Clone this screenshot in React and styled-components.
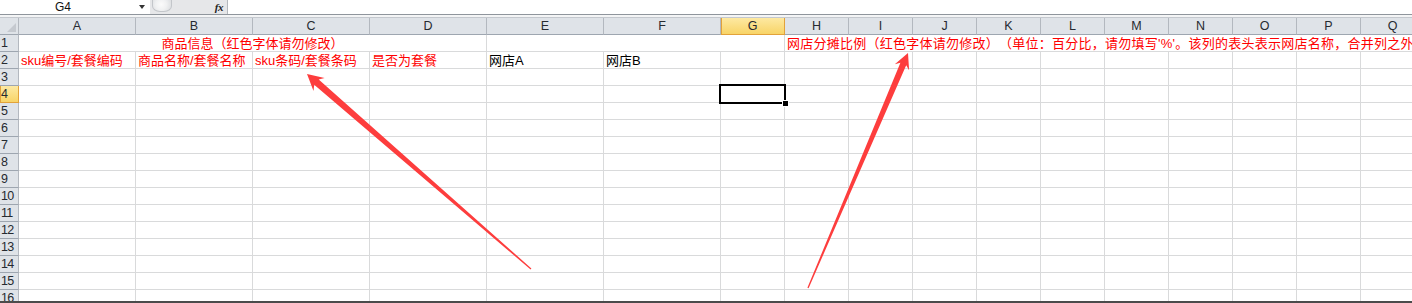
import React from 'react';
import styled, { createGlobalStyle, css } from 'styled-components';

const GlobalStyle = createGlobalStyle`
  html, body { margin: 0; padding: 0; background: #fff; overflow: hidden; }
  body { font-family: "Liberation Sans", "Noto Sans CJK SC", sans-serif; }
`;

const Window = styled.div`
  position: relative;
  width: 1412px;
  height: 303px;
  box-sizing: border-box;
  overflow: hidden;
  background: #fff;
  display: flex;
  flex-direction: column;
  border-bottom: 2px solid #4b4b4b;
`;

const FormulaBar = styled.div`
  display: flex;
  height: 14px;
  flex: none;
  border-bottom: 1px solid #8f959c;
  background: #fff;
`;

const NameBox = styled.div`
  width: 150px;
  box-sizing: border-box;
  display: flex;
  align-items: center;
  padding-left: 55px;
  font: 12px "Liberation Sans", Arial, sans-serif;
  color: #111;
`;

const DropArrow = styled.span`
  margin-left: auto;
  margin-right: 5px;
  width: 0;
  height: 0;
  border-left: 3px solid transparent;
  border-right: 3px solid transparent;
  border-top: 4px solid #333;
`;

const Splitter = styled.div`
  width: 78px;
  box-sizing: border-box;
  display: flex;
  align-items: center;
  background: #e6e7e9;
  border-right: 1px solid #b4b8bd;
  padding-left: 2px;
`;

const Knob = styled.div`
  width: 20px;
  height: 12px;
  box-sizing: border-box;
  border-radius: 0 0 8px 8px / 0 0 6px 6px;
  border: 1px solid #c3c6ca;
  border-top: none;
  background: radial-gradient(circle at 45% 40%, #fbfbfb 0, #f0f1f2 45%, #d8dadd 100%);
  align-self: flex-start;
`;

const Fx = styled.span`
  margin-left: auto;
  margin-right: 4px;
  font: italic bold 11px "Liberation Serif", serif;
  color: #222;
  letter-spacing: -0.5px;
`;

const FormulaInput = styled.div`
  flex: 1;
  background: #fff;
`;

const Spacer = styled.div`
  height: 2px;
  flex: none;
  background: #f4f5f6;
`;

const Sheet = styled.div`
  flex: 1;
  min-height: 0;
  overflow: hidden;
  display: grid;
  grid-template-columns: 19px repeat(6, 117px) repeat(11, 64px);
  grid-auto-rows: 17px;
  border-top: 1px solid #c4c8ce;
`;

const headerBase = css`
  box-sizing: border-box;
  display: flex;
  align-items: center;
  background: #dfe3e8;
  border-right: 1px solid #b3b8bf;
  border-bottom: 1px solid #9ea6b0;
  color: #262a30;
  overflow: hidden;
  white-space: nowrap;
`;

const activeHeader = css`
  background: linear-gradient(#fde9a2, #f8d467);
  border-right-color: #e2a23a;
  border-bottom-color: #e2a23a;
  box-shadow: inset 1px 0 0 #e2a23a;
`;

const Corner = styled.div`
  ${headerBase};
  position: relative;
  &::after {
    content: '';
    position: absolute;
    right: 2px;
    bottom: 2px;
    width: 0;
    height: 0;
    border-left: 9px solid transparent;
    border-bottom: 9px solid #c5c9cf;
  }
`;

const ColHeader = styled.div`
  ${headerBase};
  justify-content: center;
  font: 12.5px "Liberation Sans", Arial, sans-serif;
  ${p => p.$active && activeHeader};
`;

const RowHeader = styled.div`
  ${headerBase};
  justify-content: flex-start;
  padding-left: 1px;
  font: 12.5px "Liberation Sans", Arial, sans-serif;
  letter-spacing: -0.8px;
  ${p => p.$active && activeHeader};
`;

const Cell = styled.div`
  position: relative;
  box-sizing: border-box;
  grid-column: ${p => (p.$span ? `span ${p.$span}` : 'auto')};
  border-right: 1px solid #d9dadb;
  border-bottom: 1px solid #d9dadb;
  display: flex;
  align-items: center;
  justify-content: ${p => (p.$align === 'center' ? 'center' : 'flex-start')};
  padding: 1px 2px 0;
  white-space: nowrap;
  overflow: hidden;
  color: ${p => (p.$red ? '#ff0000' : '#000')};
  font-size: 13px;
  line-height: 16px;
  font-family: "Liberation Sans", "Noto Sans CJK SC", sans-serif;
  text-spacing-trim: space-all;
  ${p =>
    p.$wide &&
    css`
      grid-column: 9 / -1;
      letter-spacing: 0.25px;
    `}
  ${p =>
    p.$selected &&
    css`
      overflow: visible;
      z-index: 2;
      &::before {
        content: '';
        position: absolute;
        left: -2px;
        top: -2px;
        right: -2px;
        bottom: -2px;
        border: 2px solid #000;
      }
      &::after {
        content: '';
        position: absolute;
        right: -4px;
        bottom: -4px;
        width: 5px;
        height: 5px;
        background: #000;
        box-shadow: 0 0 0 1px #fff;
      }
    `}
`;

const Overlay = styled.svg`
  position: absolute;
  left: 0;
  top: 0;
  width: 1412px;
  height: 303px;
  pointer-events: none;
  z-index: 5;
`;

function arrowPoints(tail, tip, o = {}) {
  const { head = 16, wing = 8.5, neck = 12.5, neckW = 3.4, tailW = 0.6 } = o;
  const [tx, ty] = tail;
  const [px, py] = tip;
  const dx = px - tx;
  const dy = py - ty;
  const L = Math.hypot(dx, dy);
  const ux = dx / L;
  const uy = dy / L;
  const nx = -uy;
  const ny = ux;
  const at = (d, w) => [px - ux * d + nx * w, py - uy * d + ny * w];
  const pts = [
    [px, py],
    at(head, wing),
    at(neck, neckW),
    [tx + nx * tailW, ty + ny * tailW],
    [tx - nx * tailW, ty - ny * tailW],
    at(neck, -neckW),
    at(head, -wing),
  ];
  return pts.map(p => p.map(v => v.toFixed(1)).join(',')).join(' ');
}

const COLS = ['A', 'B', 'C', 'D', 'E', 'F', 'G', 'H', 'I', 'J', 'K', 'L', 'M', 'N', 'O', 'P', 'Q'];
const ACTIVE_COL = 'G';
const ACTIVE_ROW = 4;

const ROW2 = [
  { text: 'sku编号/套餐编码', red: true },
  { text: '商品名称/套餐名称', red: true },
  { text: 'sku条码/套餐条码', red: true },
  { text: '是否为套餐', red: true },
  { text: '网店A' },
  { text: '网店B' },
];

function PlainRow({ n }) {
  return (
    <>
      <RowHeader $active={n === ACTIVE_ROW}>{n}</RowHeader>
      {COLS.map(c => (
        <Cell key={c} $selected={n === ACTIVE_ROW && c === ACTIVE_COL} />
      ))}
    </>
  );
}

export default function App() {
  const rows = [];
  for (let n = 3; n <= 16; n++) rows.push(<PlainRow key={n} n={n} />);
  return (
    <>
      <GlobalStyle />
      <Window>
        <FormulaBar>
          <NameBox>
            G4
            <DropArrow />
          </NameBox>
          <Splitter>
            <Knob />
            <Fx>fx</Fx>
          </Splitter>
          <FormulaInput />
        </FormulaBar>
        <Spacer />
        <Sheet>
          <Corner />
          {COLS.map(c => (
            <ColHeader key={c} $active={c === ACTIVE_COL}>
              {c}
            </ColHeader>
          ))}

          <RowHeader>1</RowHeader>
          <Cell $span={4} $align="center" $red>
            商品信息（红色字体请勿修改）
          </Cell>
          <Cell $span={3} />
          <Cell $wide $red>
            网店分摊比例（红色字体请勿修改）（单位：百分比，请勿填写'%'。该列的表头表示网店名称，合并列之外的列请勿填写）
          </Cell>

          <RowHeader>2</RowHeader>
          {ROW2.map((c, i) => (
            <Cell key={i} $red={c.red}>
              {c.text}
            </Cell>
          ))}
          {COLS.slice(6).map(c => (
            <Cell key={c} />
          ))}

          {rows}
        </Sheet>
        <Overlay viewBox="0 0 1412 303">
          <polygon points={arrowPoints([531, 269], [307, 74])} fill="#fd3d3d" />
          <polygon points={arrowPoints([808, 288], [908, 53], { head: 15.5, wing: 7.8, neck: 12, neckW: 3.2 })} fill="#fd3d3d" />
        </Overlay>
      </Window>
    </>
  );
}
